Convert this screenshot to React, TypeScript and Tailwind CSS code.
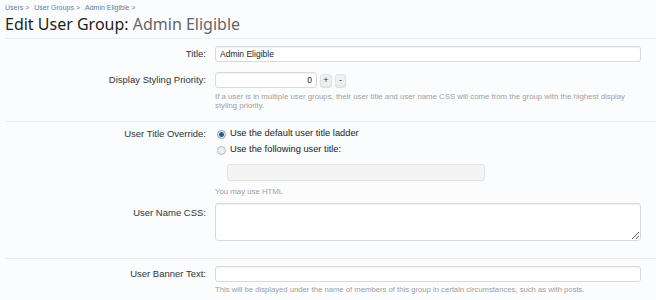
import { useState } from 'react'

const body = { fontFamily: '"Liberation Sans", Arial, sans-serif' }

function Row({ label, children, top = '' }: { label: string; children: React.ReactNode; top?: string }) {
  return (
    <div className="flex">
      <div className={`w-[206px] shrink-0 text-right text-[9.5px] leading-[16px] text-[#333] ${top}`}>{label}</div>
      <div className="ml-[9px] flex-1 pr-[15px]">{children}</div>
    </div>
  )
}

function Radio({ checked, onClick, children }: { checked: boolean; onClick: () => void; children: React.ReactNode }) {
  return (
    <div onClick={onClick} className="flex h-[16px] cursor-pointer items-center gap-[4px] text-[9.3px] text-[#222]">
      <span
        className={
          checked
            ? 'flex h-[9px] w-[9px] items-center justify-center rounded-full border border-[#8fa7bb] bg-[#e9f0f5]'
            : 'flex h-[9px] w-[9px] items-center justify-center rounded-full border border-[#b9b9b9] bg-[#eeeeee]'
        }
      >
        {checked && <span className="h-[5px] w-[5px] rounded-full bg-[#2f5f86]" />}
      </span>
      {children}
    </div>
  )
}

const inputCls =
  'block h-[16px] rounded-[3px] border border-[#dadada] bg-white px-[4px] text-[8.5px] text-[#222] shadow-[inset_0_1px_1px_rgba(0,0,0,0.06)] outline-none'

const btnCls =
  'flex h-[13px] items-center justify-center rounded-[3px] border border-[#e2e2e2] bg-[#efefef] text-[9px] leading-none text-[#333] shadow-[0_1px_1px_rgba(0,0,0,0.12)]'

export default function App() {
  const [priority, setPriority] = useState(0)
  const [override, setOverride] = useState('default')

  return (
    <div className="h-[300px] w-[656px] overflow-hidden bg-[#fbfcfd] text-[#222]" style={body}>
      {/* Breadcrumb */}
      <div className="flex gap-[5px] px-[5px] pt-[3px] text-[7px] leading-[10px] text-[#5d7f9c]">
        <span>Users &gt;</span>
        <span>User Groups &gt;</span>
        <span>Admin Eligible &gt;</span>
      </div>

      {/* Header */}
      <h1
        className="px-[5px] text-[16px] leading-[22px] text-[#1e1e1e]"
        style={{ fontFamily: '"Noto Sans", "Open Sans", sans-serif' }}
      >
        Edit User Group: <span className="text-[#666]">Admin Eligible</span>
      </h1>

      <div className="ml-[5px] mt-[3px] border-t border-[#e6eef2]" />

      {/* Section 1 */}
      <div className="pt-[7px] pb-[11px]">
        <Row label="Title:">
          <input className={`${inputCls} w-full`} defaultValue="Admin Eligible" />
        </Row>
        <div className="h-[10px]" />
        <Row label="Display Styling Priority:">
          <div className="flex items-center gap-[3px]">
            <input
              className={`${inputCls} w-[102px] text-right`}
              value={priority}
              onChange={(e) => setPriority(Number(e.target.value) || 0)}
            />
            <button onClick={() => setPriority(priority + 1)} className={`${btnCls} w-[12px]`}>
              +
            </button>
            <button onClick={() => setPriority(priority - 1)} className={`${btnCls} w-[11px]`}>
              -
            </button>
          </div>
          <p className="mt-[4px] text-[7.8px] leading-[9px] text-[#a0a0a0]">
            If a user is in multiple user groups, their user title and user name CSS will come from the group with the highest display
            <br />
            styling priority.
          </p>
        </Row>
      </div>

      <div className="ml-[5px] border-t border-[#e0eff1]" />

      {/* Section 2 */}
      <div className="pt-[4px] pb-[17px]">
        <Row label="User Title Override:">
          <div className="ml-[2px]">
            <Radio checked={override === 'default'} onClick={() => setOverride('default')}>
              Use the default user title ladder
            </Radio>
            <Radio checked={override === 'custom'} onClick={() => setOverride('custom')}>
              Use the following user title:
            </Radio>
          </div>
          <div className="pl-[12px] pt-[6px]">
            <input
              disabled={override !== 'custom'}
              className="block h-[17px] w-[258px] rounded-[3px] border border-[#e2e2e2] bg-[#f4f4f4] px-[4px] text-[8.5px] outline-none"
            />
          </div>
          <p className="mt-[6px] text-[7.8px] leading-[10px] text-[#a0a0a0]">You may use HTML</p>
        </Row>
        <div className="h-[6px]" />
        <Row label="User Name CSS:" top="pt-[2px]">
          <textarea className="block h-[38px] w-full resize-y rounded-[3px] border border-[#dadada] bg-white px-[4px] text-[8.5px] shadow-[inset_0_1px_1px_rgba(0,0,0,0.06)] outline-none" />
        </Row>
      </div>

      <div className="ml-[5px] border-t border-[#e6eef2]" />

      {/* Section 3 */}
      <div className="pt-[7px]">
        <Row label="User Banner Text:">
          <input className={`${inputCls} w-full`} />
          <p className="mt-[3px] text-[7.7px] leading-[9px] text-[#a0a0a0]">
            This will be displayed under the name of members of this group in certain circumstances, such as with posts.
          </p>
        </Row>
      </div>
    </div>
  )
}
